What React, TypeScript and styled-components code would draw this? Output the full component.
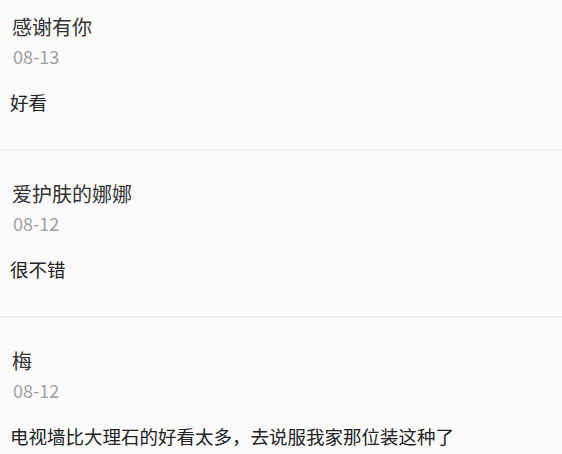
import React from "react";
import styled, { createGlobalStyle } from "styled-components";

const GlobalStyle = createGlobalStyle`
	html, body {
		margin: 0;
		padding: 0;
		background: #fafafa;
	}
	body {
		font-family: "Noto Sans CJK SC", "Noto Sans", sans-serif;
		overflow: hidden;
	}
`;

const StyledCommentList = styled.ul`
	list-style: none;
	margin: -16px 0 0;
	padding: 0;
	width: 562px;
`;

const StyledCommentItem = styled.li`
	display: flex;
	flex-direction: column;
	padding: 31px 10px 35px;
	border-bottom: 2px solid #efefef;
`;

const StyledUserName = styled.span`
	padding-left: 2px;
	font-size: 20px;
	line-height: 24px;
	color: #333;
`;

const StyledDate = styled.span`
	margin-top: 5px;
	padding-left: 3px;
	font-size: 18px;
	line-height: 24px;
	color: #a0a0a0;
`;

const StyledContent = styled.p`
	margin: 22px 0 0;
	font-size: 18.5px;
	line-height: 24px;
	color: #222;
	white-space: nowrap;
`;

type Comment = {
	user: string;
	date: string;
	text: string;
};

const comments: Comment[] = [
	{ user: "感谢有你", date: "08-13", text: "好看" },
	{ user: "爱护肤的娜娜", date: "08-12", text: "很不错" },
	{ user: "梅", date: "08-12", text: "电视墙比大理石的好看太多，去说服我家那位装这种了" },
];

const App = () => {
	return (
		<>
			<GlobalStyle />
			<StyledCommentList>
				{comments.map((comment, index) => (
					<StyledCommentItem key={index}>
						<StyledUserName>{comment.user}</StyledUserName>
						<StyledDate>{comment.date}</StyledDate>
						<StyledContent>{comment.text}</StyledContent>
					</StyledCommentItem>
				))}
			</StyledCommentList>
		</>
	);
};

export default App;
